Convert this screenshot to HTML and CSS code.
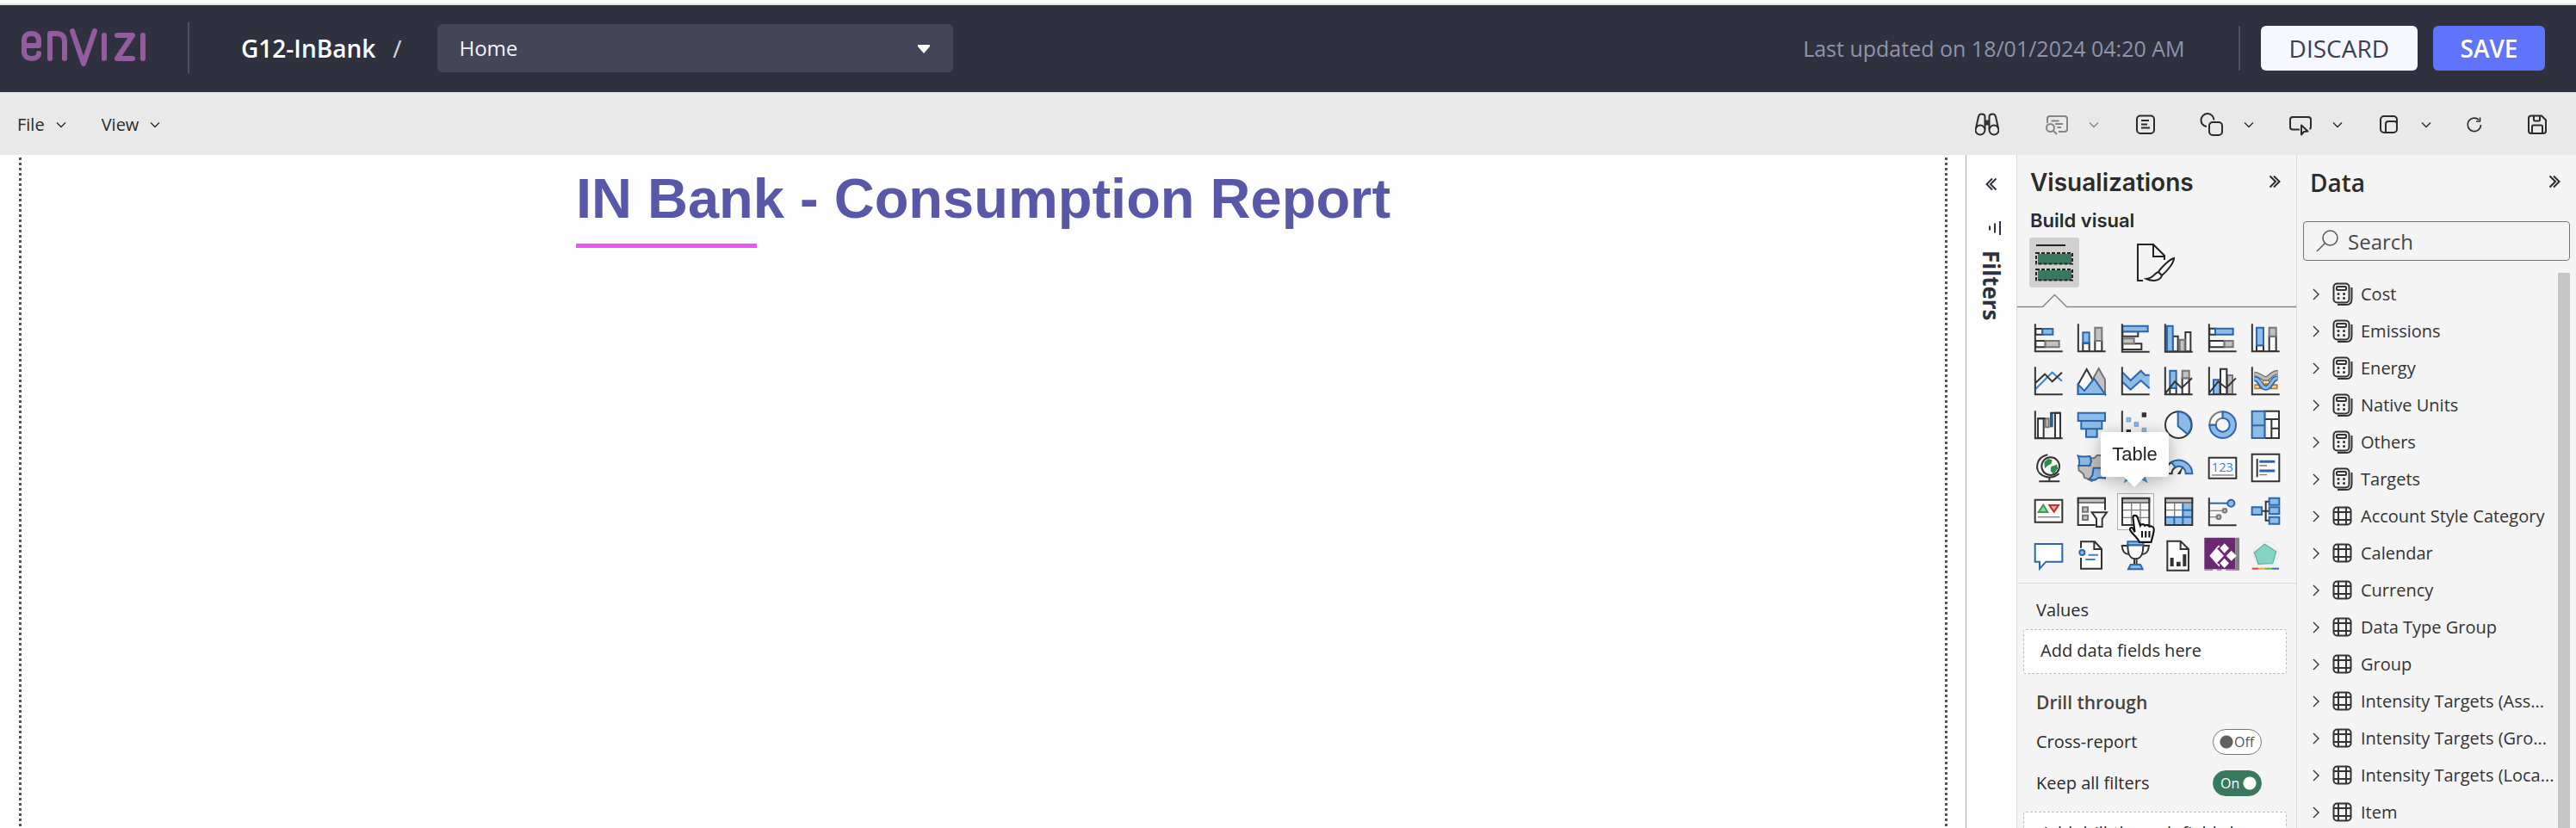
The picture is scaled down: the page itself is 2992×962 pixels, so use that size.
FILE: index.html
```html
<!DOCTYPE html>
<html lang="en">
<head>
<meta charset="utf-8">
<title>G12-InBank / Home</title>
<link rel="stylesheet" href="styles.css">
</head>
<body>
<svg class="defs" aria-hidden="true">
  <symbol id="chev-down" viewBox="0 0 12 8"><path d="M1 1.5l5 5 5-5"/></symbol>
  <symbol id="chev-right" viewBox="0 0 8 14"><path d="M1 1l6 6-6 6"/></symbol>
  <symbol id="dbl-right" viewBox="0 0 14 16"><path d="M1.5 1.5L8 8l-6.500 6.500M6 1.500L12.500 8L6 14.500"/></symbol>
  <symbol id="calc" viewBox="0 0 24 28"><rect x="1.500" y="1.500" width="18" height="22" rx="4"/><rect x="5" y="5" width="11" height="4" rx="1"/><path d="M22.500 6v13c0 4-2 7-6 7H6"/><path class="dots" d="M7 13.500h.1M13.500 13.500h.1M7 18.500h.1M13.500 18.500h.1"/></symbol>
  <symbol id="tbl" viewBox="0 0 24 24"><rect x="1.500" y="1.500" width="20" height="20" rx="4"/><path d="M7 1.500v20M16 1.500v20M1.500 7h20M1.500 16h20"/></symbol>
</svg>

<header class="topbar">
  <svg class="logo" viewBox="0 0 148 46" role="img" aria-label="envizi">
    <path d="M4 20h17v-6c0-5-3-8-8.500-8S4 9 4 14v13c0 5 4 8 9 8 4 0 8-2 8-6M34 35V6h8c6 0 9 4 9 9v20M60 3l13 38L86 3M97 8v27M112 8h18l-18 27h18M142 8v27"/>
  </svg>
  <span class="rule"></span>
  <span class="workspace">G12-InBank</span>
  <span class="slash">/</span>
  <div class="page-picker">
    <select aria-label="Page"><option>Home</option></select>
    <svg class="caret" viewBox="0 0 16 10"><path d="M1 0h14v2L8 10 1 2z"/></svg>
  </div>
  <span class="updated">Last updated on 18/01/2024 04:20 AM</span>
  <span class="rule rule-right"></span>
  <button class="btn btn-light">DISCARD</button>
  <button class="btn btn-primary">SAVE</button>
</header>

<nav class="toolbar">
  <button class="menu">File <svg class="chev"><use href="#chev-down"/></svg></button>
  <button class="menu">View <svg class="chev"><use href="#chev-down"/></svg></button>
  <div class="tools">
    <button class="tool single lead" aria-label="Explore"><svg class="ico" viewBox="0 0 28 28"><circle cx="6" cy="20" r="5.500"/><circle cx="22" cy="20" r="5.500"/><path d="M.8 19L4 4.500C4.500 2 6 1.500 7.500 1.500c2.500 0 4 1 4 3V19M27.200 19L24 4.500c-.5-2.500-2-3-3.500-3-2.500 0-4 1-4 3V19"/><path class="solid" d="M12 8.500h4v6h-4z"/></svg></button>
    <button class="tool faded" aria-label="Inspect"><svg class="ico" viewBox="0 0 28 28"><path d="M3 12V7c0-2 1-3 3-3h17c2 0 3 1 3 3v12c0 2-1 3-3 3h-7M7.500 9.500h9M12 13h9M14.500 17H19"/><circle cx="6.500" cy="17.500" r="4.500"/><path d="M10 21l4 4"/></svg><svg class="chev"><use href="#chev-down"/></svg></button>
    <button class="tool single" aria-label="Text box"><svg class="ico" viewBox="0 0 28 28"><rect x="4" y="3.500" width="20" height="20.500" rx="4"/><path d="M9 9h9M9 13.500h7M9 17.500h10"/></svg></button>
    <button class="tool" aria-label="Shapes"><svg class="ico" viewBox="0 0 28 28"><path d="M8 16A7.500 7.500 0 1 1 16.500 8.500"/><rect x="11" y="11" width="15" height="15" rx="4"/></svg><svg class="chev"><use href="#chev-down"/></svg></button>
    <button class="tool" aria-label="Buttons"><svg class="ico" viewBox="0 0 28 28"><path d="M13 19.500H5c-2 0-3-1-3-3V8c0-2 1-3 3-3h18c2 0 3 1 3 3v8.500c0 1-.5 2-1.500 2.500M15 14.500v11l3-3.500 4.500-.5z"/></svg><svg class="chev"><use href="#chev-down"/></svg></button>
    <button class="tool" aria-label="Visual interactions"><svg class="ico" viewBox="0 0 28 28"><rect x="4" y="4" width="19" height="19" rx="4"/><path d="M10 23V13c0-2 1-3 3-3h7c2 0 3 1 3 3"/></svg><svg class="chev"><use href="#chev-down"/></svg></button>
    <button class="tool single" aria-label="Refresh"><svg class="ico ico-small" viewBox="0 0 20 20"><path d="M17.500 10A7.700 7.700 0 1 1 15 4.200M16.500 1.500v4.500H12"/></svg></button>
    <button class="tool" aria-label="Save report"><svg class="ico" viewBox="0 0 28 28"><path d="M4 6.500C4 4.500 5 3.500 7 3.500h12l5 5V21c0 2-1 3-3 3H7c-2 0-3-1-3-3zM10 3.500V8c0 1 .5 1.500 1.500 1.500h4c1 0 1.500-.5 1.500-1.500V3.500M8 24v-8c0-1 .5-1.500 1.500-1.500h9c1 0 1.500.5 1.500 1.500v8"/></svg></button>
  </div>
</nav>

<main class="workarea">
  <section class="canvas">
    <h1 class="report-title">IN Bank - Consumption Report</h1>
  </section>

  <aside class="filters">
    <button class="collapse" aria-label="Expand filters"><svg class="dbl flip"><use href="#dbl-right"/></svg></button>
    <svg class="filter-ico" viewBox="0 0 14 18"><path d="M1 6.500v5M7 3.500v11M13 1v16"/></svg>
    <h2 class="filters-title">Filters</h2>
  </aside>

  <aside class="viz">
    <div class="pane-head"><h2 class="viz-title">Visualizations</h2><button class="collapse" aria-label="Collapse visualizations"><svg class="dbl"><use href="#dbl-right"/></svg></button></div>
    <h3 class="viz-sub">Build visual</h3>
    <div class="modes">
      <button class="mode active" aria-label="Build visual"><svg viewBox="0 0 44 44"><path class="k2" d="M1 2h34"/><path class="green" d="M3 12h39v12H3zM3 31h39v12H3z"/><path class="dash" d="M1 11h42v12.500H1zM1 30h42v12.500H1z"/></svg></button>
      <button class="mode" aria-label="Format visual"><svg viewBox="0 0 44 44"><path class="k2" d="M7 43H1V1h18l13 13v5M19 1v14h13"/><path class="k2" d="M43 17c-5 1-15 11-18 16l4 4c5-4 14-14 14-20zM25 33c-5 1-5 7-14 8 6 3 16 3 18-4"/></svg></button>
    </div>
    <svg class="notch" viewBox="0 0 325 17" preserveAspectRatio="xMinYMin slice"><path d="M0 15.500h29.500L43.500 1.500l14 14H900"/></svg>
    <div class="gallery">
      <button aria-label="Stacked bar chart"><svg viewBox="0 0 99 99"><path class="w" d="M4 18h24v20H4zM4 60h34v22H4z"/><path class="b" d="M28 18h36v20H28z"/><path class="g" d="M38 60h48v22H38z"/><path class="k" d="M2.500 1v96H98"/></svg></button>
      <button aria-label="Stacked column chart"><svg viewBox="0 0 99 99"><path class="w" d="M19 68h22v28H19zM61 60h24v36H61z"/><path class="b" d="M19 31h22v36H19z"/><path class="g" d="M61 14h24v46H61z"/><path class="k" d="M2.500 1v96H98"/></svg></button>
      <button aria-label="Clustered bar chart"><svg viewBox="0 0 99 99"><path class="w" d="M4 28h54v16H4zM4 70h66v20H4z"/><path class="g" d="M4 52h40v18H4z"/><path class="b" d="M4 8h88v20H4z"/><path class="k" d="M2.500 1v97H98"/></svg></button>
      <button aria-label="Clustered column chart"><svg viewBox="0 0 99 99"><path class="w" d="M29 44h18v53H29zM73 30h18v67H73z"/><path class="g" d="M53 56h18v41H53z"/><path class="b" d="M9 8h20v89H9z"/><path class="k" d="M2.500 1v97H98"/></svg></button>
      <button aria-label="100% stacked bar chart"><svg viewBox="0 0 99 99"><path class="w" d="M4 17h20v21H4zM4 60h52v22H4z"/><path class="b" d="M24 17h62v21H24z"/><path class="g" d="M56 60h30v22H56z"/><path class="k" d="M2.500 1v96H98"/></svg></button>
      <button aria-label="100% stacked column chart"><svg viewBox="0 0 99 99"><path class="w" d="M18 76h24v20H18zM62 44h24v52H62z"/><path class="b" d="M18 14h24v62H18z"/><path class="g" d="M62 14h24v30H62z"/><path class="k" d="M2.500 1v96H98"/></svg></button>

      <button aria-label="Line chart"><svg viewBox="0 0 99 99"><path class="bl" d="M4 78l58-58 34 30"/><path class="k" d="M4 56l32-30 26 26 34-32M2.500 1v96H98"/></svg></button>
      <button aria-label="Area chart"><svg viewBox="0 0 99 99"><path class="w" d="M2 96V62L32 9l34 60v27z"/><path class="g" d="M54 42L74 6l22 40v50z"/><path class="b" d="M2 62l22 22 34-42 38 54H2z"/></svg></button>
      <button aria-label="Stacked area chart"><svg viewBox="0 0 99 99"><path class="bf" d="M4 20l28 28 36-34 14 15h16v46L68 48 32 80 4 54z"/><path class="bs" d="M4 20l28 28 36-34 14 15h16M4 54l28 26 36-32 30 28"/><path class="k" d="M2.500 1v96H98"/></svg></button>
      <button aria-label="Line and stacked column chart"><svg viewBox="0 0 99 99"><path class="w" d="M19 74h22v22H19zM62 40h24v56H62z"/><path class="b" d="M19 14h22v60H19z"/><path class="g" d="M62 14h24v26H62z"/><path class="k" d="M4 92l32-40 24 22 36-34M2.500 1v96H98"/></svg></button>
      <button aria-label="Line and clustered column chart"><svg viewBox="0 0 99 99"><path class="b" d="M18 46h22v50H18z"/><path class="g" d="M66 30h18v66H66z"/><path class="w" d="M42 8h22v88H42z"/><path class="k" d="M4 90l30-38 28 22 34-34M2.500 1v96H98"/></svg></button>
      <button aria-label="Ribbon chart"><svg viewBox="0 0 99 99"><path class="r-o" d="M10 70h82M38 54h26"/><path class="r-oi" d="M14 70h12M72 70h14M42 54h18"/><path class="r-g" d="M10 26c18 0 26 16 40 16s20-22 42-22"/><path class="r-gi" d="M12 26c18 0 24 16 38 16s20-22 40-22"/><path class="r-b" d="M10 42c20 0 20 32 40 32s20-34 42-34"/><path class="r-bi" d="M12 42c20 0 20 32 38 32s20-34 40-34"/><path class="k" d="M2.500 1v96H98"/></svg></button>

      <button aria-label="Waterfall chart"><svg viewBox="0 0 99 99"><path class="w" d="M12 28h20v68H12zM72 8h18v88H72z"/><path class="g" d="M38 28h12v30H38z"/><path class="navy" d="M54 6h11v52H54z"/><path class="k" d="M12 28h26M56 8h34M2.500 1v96H98"/></svg></button>
      <button aria-label="Funnel"><svg viewBox="0 0 99 99"><path class="b" d="M2 8h94v28H2zM13 36h72v28H13zM30 64h38v28H30z"/></svg></button>
      <button aria-label="Scatter chart"><svg viewBox="0 0 99 99"><path class="k" d="M2.500 1v96H98"/><path class="sq" d="M18 25h14v14H18zM45 41h14v14H45zM72 61h14v14H72z"/><path class="solid" d="M71 7h16v16H71zM17 66h16v16H17z"/></svg></button>
      <button aria-label="Pie chart"><svg viewBox="0 0 99 99"><circle class="w" cx="49" cy="50" r="46"/><path class="b" d="M47 4a46 46 0 0 1 33 78L47 54z"/></svg></button>
      <button aria-label="Donut chart"><svg viewBox="0 0 99 99"><path class="g lite" d="M4 50A46 46 0 0 1 50 4v22a24 24 0 0 0-24 24z"/><path class="b" d="M50 4A46 46 0 1 1 4 50h22a24 24 0 1 0 24-24z"/></svg></button>
      <button aria-label="Treemap"><svg viewBox="0 0 99 99"><path class="w" d="M46 2h50v94H46zM46 30h50M70 30v66M70 62h26"/><path class="b" d="M2 2h44v94H2zM2 52h44"/></svg></button>

      <button aria-label="Map"><svg viewBox="0 0 99 99"><circle class="w" cx="56" cy="44" r="31"/><path class="leaf" d="M34 30l14-12 14 4-4 14-12 6-10 10zM58 46l20-8 4 14-16 20-10-12z"/><path class="k" d="M46 4C4 14-2 60 28 76c18 10 40 8 58-6M52 84v12M16 97h72"/></svg></button>
      <button aria-label="Filled map"><svg viewBox="0 0 99 99"><path class="g" d="M44 16l14 0 10-10 28 0v40l-20 20-18 22-8 8-14-8-12-4-4-14L4 58V42h40z"/><path class="b" d="M2 8c14 6 28 0 42 2l4 18-6 14H4c6-12 2-22-2-34zM56 50h40v36l-22-2-14 8-20-2 12-14z"/></svg></button>
      <button aria-label="Azure map"><svg viewBox="0 0 99 99"><path class="azure" d="M50 0l42 103-42-22-42 22z"/></svg></button>
      <button aria-label="Gauge"><svg viewBox="0 0 99 99"><path class="w" d="M2 70A48 48 0 0 1 30 27l10 20a24 24 0 0 0-14 23z"/><path class="b" d="M24 30a48 48 0 0 1 73 40H74a24 24 0 0 0-36-22z"/><path class="solid" d="M66 42L56 72H44z"/></svg></button>
      <button aria-label="Card"><svg viewBox="0 0 99 99"><path class="w" d="M2 14h95v72H2z"/><text class="num" x="49" y="63">123</text><path class="gs" d="M12 75h76"/></svg></button>
      <button aria-label="Multi-row card"><svg viewBox="0 0 99 99"><path class="w" d="M2 2h95v95H2z"/><path class="k" d="M20 18v64"/><path class="navyline" d="M28 28h54M28 60h54"/><path class="gs" d="M28 42h26M28 74h26"/></svg></button>

      <button aria-label="KPI"><svg viewBox="0 0 99 99"><path class="w" d="M2 8h95v78H2z"/><path class="up" d="M14 51l17-25 15 25z"/><path class="down" d="M52 27h32L68 50z"/><path class="gs" d="M12 68h76"/></svg></button>
      <button aria-label="Slicer"><svg viewBox="0 0 99 99"><path class="wf" d="M2 18h94v76H2z"/><path class="g" d="M2 2h94v16H2zM18 34h18v16H18zM18 62h18v16H18z"/><path class="k" d="M96 44V2H2v94h60"/><path class="w" d="M50 52h52L86 74v28H66V74z"/></svg></button>
      <button class="picked" aria-label="Table"><svg viewBox="0 0 99 99"><path class="wf" d="M3 2h94v94H3z"/><path class="gs" d="M35 18v78M66 18v78M3 44h94M3 70h94"/><path class="g" d="M3 4h94v14H3z"/><path class="k" d="M3 2h94v94H3z"/></svg></button>
      <button aria-label="Matrix"><svg viewBox="0 0 99 99"><path class="wf" d="M3 2h94v94H3z"/><path class="bf" d="M64 20h32v76H3V68h61z"/><path class="gs" d="M35 18v50M3 44h62"/><path class="bs" d="M64 20v76M34 68v28M3 68h94M64 44h32"/><path class="g" d="M3 4h94v14H3z"/><path class="k" d="M3 2h94v94H3z"/></svg></button>
      <button aria-label="Key influencers"><svg viewBox="0 0 99 99"><path class="bs" d="M4 20h62"/><path class="gs" d="M4 46h46M4 68h26"/><circle class="b" cx="79" cy="20" r="12"/><circle class="g" cx="57" cy="46" r="7"/><circle class="g" cx="36" cy="68" r="7"/><path class="k" d="M2.500 1v96H98"/></svg></button>
      <button aria-label="Decomposition tree"><svg viewBox="0 0 99 99"><path class="k" d="M38 47h24M62 14H50v66h12"/><path class="b" d="M2 34h34v26H2zM62 2h35v24H62zM62 34h35v24H62zM62 68h35v24H62z"/></svg></button>

      <button aria-label="Q&amp;A"><svg viewBox="0 0 99 99"><path class="bw" d="M2 12h95v62H40L18 98V74H2z"/></svg></button>
      <button aria-label="Narrative"><svg viewBox="0 0 99 99"><path class="wf" d="M12 4h48l24 26v70H12z"/><path class="k" d="M12 26V4h48l24 26v68H12V60M58 4v26h26"/><circle class="b" cx="16" cy="42" r="9"/><path class="bl" d="M38 50h34M28 66h34"/></svg></button>
      <button aria-label="Goals"><svg viewBox="0 0 99 99"><path class="w" d="M22 16h54c0 34-8 48-27 48S22 50 22 16zM22 18H2c2 24 12 30 24 30M76 18h20c-2 24-12 30-24 30M45 64v20h8V64"/><path class="b" d="M22 4h54v12H22zM32 84h34l8 16H24z"/></svg></button>
      <button aria-label="Paginated report"><svg viewBox="0 0 99 99"><path class="w" d="M10 2h46l28 28v74H10zM56 2v28h28"/><path class="solid" d="M20 60h12v30H20zM42 74h14v16H42zM64 48h12v42H64z"/></svg></button>
      <button aria-label="Power Apps"><svg viewBox="0 0 99 99"><path class="plum" d="M-14-10H94v110H-14z"/><path class="ash" d="M94-10h14v114H94zM-14 100h30v4h-30zM30 100h16v4H30zM60 100h34v4H60z"/><path class="dia" d="M56 10l16 17-16 17-16-17zM56 62l16 17-16 17-16-17zM80 35l18 18-18 18-18-18zM36 16l4 6-10 6 24 25-24 25 10 6-2 8L4 53z"/></svg></button>
      <button aria-label="Radar chart"><svg viewBox="0 0 99 99"><circle class="halo" cx="50" cy="48" r="44"/><circle class="halo" cx="50" cy="48" r="30"/><path class="teal" d="M46 12l40 26-12 42-50 2L10 42z"/><path class="c1" d="M2 98h22"/><path class="c2" d="M24 98h24"/><path class="c3" d="M48 98h24"/><path class="c4" d="M72 98h24"/></svg></button>

      <div class="tooltip" role="tooltip">Table</div>
      <svg class="pointer" viewBox="0 0 30 34"><path d="M7 20L5 4C5 1 9 1 10 4l3 9c1-2 4-2 5 0 1-1 4-1 5 1 2-1 5 0 5 3 0 5-2 8-3 14H12C10 26 4 22 2 18c-1-2 1-4 3-2z"/><path class="fingers" d="M15 19v7M19 19v7M23 19v7"/></svg>
    </div>
    <div class="wells">
      <p class="well-label">Values</p>
      <div class="well">Add data fields here</div>
      <h3 class="drill">Drill through</h3>
      <label class="switch-row">Cross-report <span class="switch"><input type="checkbox" role="switch"><span class="state">Off</span></span></label>
      <label class="switch-row">Keep all filters <span class="switch on"><input type="checkbox" role="switch" checked><span class="state">On</span></span></label>
      <div class="well">Add drill-through fields here</div>
    </div>
  </aside>

  <aside class="data">
    <div class="pane-head"><h2 class="data-title">Data</h2><button class="collapse" aria-label="Collapse data"><svg class="dbl"><use href="#dbl-right"/></svg></button></div>
    <label class="search"><svg viewBox="0 0 26 26"><circle cx="16.500" cy="9.500" r="8.500"/><path d="M10.500 15.500L1 25"/></svg><input type="text" placeholder="Search" aria-label="Search"></label>
    <div class="fields">
      <ul class="tree">
        <li><svg class="cr"><use href="#chev-right"/></svg><svg class="ti"><use href="#calc"/></svg><span>Cost</span></li>
        <li><svg class="cr"><use href="#chev-right"/></svg><svg class="ti"><use href="#calc"/></svg><span>Emissions</span></li>
        <li><svg class="cr"><use href="#chev-right"/></svg><svg class="ti"><use href="#calc"/></svg><span>Energy</span></li>
        <li><svg class="cr"><use href="#chev-right"/></svg><svg class="ti"><use href="#calc"/></svg><span>Native Units</span></li>
        <li><svg class="cr"><use href="#chev-right"/></svg><svg class="ti"><use href="#calc"/></svg><span>Others</span></li>
        <li><svg class="cr"><use href="#chev-right"/></svg><svg class="ti"><use href="#calc"/></svg><span>Targets</span></li>
        <li><svg class="cr"><use href="#chev-right"/></svg><svg class="ti"><use href="#tbl"/></svg><span>Account Style Category</span></li>
        <li><svg class="cr"><use href="#chev-right"/></svg><svg class="ti"><use href="#tbl"/></svg><span>Calendar</span></li>
        <li><svg class="cr"><use href="#chev-right"/></svg><svg class="ti"><use href="#tbl"/></svg><span>Currency</span></li>
        <li><svg class="cr"><use href="#chev-right"/></svg><svg class="ti"><use href="#tbl"/></svg><span>Data Type Group</span></li>
        <li><svg class="cr"><use href="#chev-right"/></svg><svg class="ti"><use href="#tbl"/></svg><span>Group</span></li>
        <li><svg class="cr"><use href="#chev-right"/></svg><svg class="ti"><use href="#tbl"/></svg><span>Intensity Targets (Ass...</span></li>
        <li><svg class="cr"><use href="#chev-right"/></svg><svg class="ti"><use href="#tbl"/></svg><span>Intensity Targets (Gro...</span></li>
        <li><svg class="cr"><use href="#chev-right"/></svg><svg class="ti"><use href="#tbl"/></svg><span>Intensity Targets (Loca...</span></li>
        <li><svg class="cr"><use href="#chev-right"/></svg><svg class="ti"><use href="#tbl"/></svg><span>Item</span></li>
      </ul>
      <div class="scrollbar"></div>
    </div>
  </aside>
</main>
</body>
</html>
```

FILE: styles.css
```css
* { box-sizing: border-box; }
html, body { height: 100%; }
body {
  margin: 0;
  display: flex;
  flex-direction: column;
  overflow: hidden;
  background: #fefefe;
  color: #2b2b2b;
  font-family: "Open Sans", "Noto Sans", sans-serif;
  font-size: 20px;
}
h1, h2, h3, p, ul { margin: 0; padding: 0; }
button { border: 0; background: none; padding: 0; color: inherit; font: inherit; }
svg { display: block; flex: none; fill: none; stroke: currentColor; }
.defs { position: absolute; width: 0; height: 0; }

/* Top bar */
.topbar {
  flex: none;
  display: flex;
  align-items: center;
  height: 103px;
  margin-top: 4px;
  padding: 0 36px 2px 24px;
  border-top: 2px solid #dfe5df;
  background: #2f313e;
  color: #fff;
}
.logo { width: 148px; height: 46px; stroke: #935c9e; stroke-width: 6; stroke-linecap: round; stroke-linejoin: round; }
.rule { width: 2px; height: 59px; margin-left: 46px; background: #4e505d; }
.workspace { margin-left: 60px; font-size: 28px; font-weight: 600; }
.slash { margin-left: 20px; font-size: 28px; color: #d4d8e8; }
.page-picker { position: relative; width: 20.4%; height: 56px; margin-left: 42px; }
.page-picker select {
  appearance: none;
  width: 100%;
  height: 100%;
  padding: 0 25px;
  border: 0;
  border-radius: 6px;
  background: #444559;
  color: #f2f4fb;
  font: 24px "Open Sans", sans-serif;
}
.caret { position: absolute; right: 26px; top: 24px; width: 16px; height: 10px; fill: #fff; stroke: none; }
.updated { margin-left: auto; font-size: 25px; color: #8d94ae; }
.rule-right { height: 52px; margin: 0 24px 0 62px; }
.btn { height: 52px; min-width: 130px; border-radius: 6px; font-size: 28px; }
.btn-light { padding: 0 33px; background: #f7f8ff; color: #3c3d50; }
.btn-primary { margin-left: 18px; background: #5f74fa; color: #fff; font-weight: 600; }

/* Command bar */
.toolbar { flex: none; display: flex; align-items: center; height: 73px; padding: 2px 31px 0 20px; background: #e9e9e9; }
.menu { display: flex; align-items: center; gap: 13px; margin-right: 41px; }
.chev { width: 12px; height: 8px; stroke-width: 1.4; }
.tools { display: flex; align-items: center; gap: 40px; margin-left: auto; }
.tool { display: flex; align-items: center; gap: 23px; }
.single { margin-right: 9px; }
.lead { margin-right: 13px; }
.faded { color: #858585; }
.ico { width: 28px; height: 28px; stroke-width: 2; stroke-linejoin: round; }
.ico-small { width: 20px; height: 20px; stroke-width: 1.6; }
.solid { fill: #333; stroke: none; }

/* Work area */
.workarea { flex: 1; min-height: 0; display: flex; overflow: hidden; }
.canvas {
  flex: 1;
  margin: 3px 21px 0 22px;
  padding-top: 12px;
  text-align: center;
  background:
    repeating-linear-gradient(#555 0 3px, transparent 3px 6px) left / 3px 100% no-repeat,
    repeating-linear-gradient(#555 0 3px, transparent 3px 6px) right / 3px 100% no-repeat;
}
.report-title {
  display: inline-block;
  color: #5957a8;
  font: bold 65px/72px "Liberation Sans", Arial, sans-serif;
  white-space: nowrap;
}
.report-title::after { content: ""; display: block; width: 210px; height: 5px; margin-top: 16px; background: #ef52fa; }

.collapse { display: block; }
.dbl { width: 14px; height: 16px; stroke-width: 2; }
.flip { transform: rotate(180deg); }

.filters { flex: none; width: 59px; padding-top: 26px; display: flex; flex-direction: column; align-items: center; border-left: 1px solid #aaa; color: #2f3140; }
.filter-ico { width: 14px; height: 18px; margin: 34px 0 17px 8px; stroke-width: 2; }
.filters-title { writing-mode: vertical-rl; font-size: 26px; line-height: 28px; font-weight: 700; }

.viz, .data { flex: none; width: 325px; background: #f4f4f4; border-left: 1px solid #dadada; }
.viz { display: flex; flex-direction: column; }
.viz > * { flex: none; }
.pane-head { flex: none; display: flex; align-items: center; justify-content: space-between; height: 64px; padding: 0 18px 0 15px; }
.pane-head .collapse { margin-bottom: 2px; }
.viz-title { font: 600 28px/40px Inter, sans-serif; }
.viz-sub { padding-left: 15px; font: 600 22px/24px Inter, sans-serif; }
.modes { display: flex; gap: 60px; padding: 8px 14px 0; }
.mode { width: 58px; height: 58px; display: grid; place-items: center; border-radius: 3px; }
.mode.active { background: #d0d0d0; }
.mode svg { width: 44px; height: 44px; }
.k2 { stroke: #222; stroke-width: 2; }
.green { fill: #37785f; stroke: none; }
.dash { stroke: #222; stroke-width: 2; stroke-dasharray: 4 2; }
.notch { width: 100%; height: 17px; margin-top: 7px; stroke: #888; stroke-width: 1.5; }

.gallery { position: relative; display: grid; grid-template-columns: repeat(6, 1fr); grid-template-rows: repeat(6, 1fr); height: 303px; margin: 9px 10px 7px 11px; }
.gallery button { display: grid; place-items: center; }
.gallery button svg { width: 33px; height: 33px; overflow: visible; stroke-width: 6; }
.picked { place-self: center; width: 43px; height: 43px; outline: 1px solid #b0b0b0; outline-offset: -1px; background: #f8f8f8; }
.k { stroke: #333; }
.w { fill: #fbfbfb; stroke: #333; }
.wf { fill: #fbfbfb; stroke: none; }
.g { fill: #c2c2c2; stroke: #767676; }
.lite { fill: #fbfbfb; }
.gs { stroke: #7d7d7d; stroke-width: 4; }
.b { fill: #8dbbe8; stroke: #2a66ab; }
.bf { fill: #8dbbe8; stroke: none; }
.bs { stroke: #2a66ab; }
.bl { stroke: #3f84c5; }
.bw { fill: #fff; stroke: #2a66ab; }
.sq { fill: #8dbbe8; stroke: #4d8bc4; stroke-width: 2; }
.navy { fill: #2a5c9a; stroke: none; }
.navyline { stroke: #2a66ab; stroke-width: 9; }
.azure { fill: #4a93d8; stroke: none; }
.leaf { fill: #2f8a48; stroke: none; }
.num { fill: #3b84cc; stroke: none; font: 44px "Open Sans", sans-serif; text-anchor: middle; }
.up { fill: #9ad3a5; stroke: #3f9a56; }
.down { fill: #f2a0a0; stroke: #b93333; }
.r-o { stroke: #c47a22; stroke-width: 18; }
.r-oi { stroke: #ffe3ae; stroke-width: 7; }
.r-g { stroke: #767676; stroke-width: 18; }
.r-gi { stroke: #bdbdbd; stroke-width: 9; }
.r-b { stroke: #2a66ab; stroke-width: 18; }
.r-bi { stroke: #8dbbe8; stroke-width: 9; }
.plum { fill: #6b2873; stroke: none; }
.ash { fill: #858088; stroke: none; }
.dia { fill: #fff; stroke: none; }
.halo { stroke: #dedede; stroke-width: 2; }
.teal { fill: #85d3c5; stroke: #5cb8a8; stroke-width: 4; }
.c1 { stroke: #d8423a; }
.c2 { stroke: #eda63a; }
.c3 { stroke: #55b060; }
.c4 { stroke: #3a66c0; }

.tooltip {
  position: absolute;
  left: 86px;
  top: 135px;
  width: 79px;
  border-radius: 4px;
  background: #fff;
  color: #222;
  font: 22px/52px "Liberation Sans", Arial, sans-serif;
  text-align: center;
  filter: drop-shadow(0 4px 10px rgba(0, 0, 0, 0.28));
}
.tooltip::after { content: ""; position: absolute; left: 27px; top: 100%; border: 12px solid transparent; border-top-color: #fff; border-bottom: 0; }
.pointer { position: absolute; left: 118px; top: 230px; width: 32px; height: 36px; fill: #fff; stroke: #111; stroke-width: 2; }

.wells { border-top: 1px solid #dadada; padding: 16px 11px 0 7px; }
.well-label, .drill, .switch-row { padding-left: 15px; line-height: 30px; }
.well { height: 52px; padding-left: 19px; border: 1px dashed #bdbdbd; border-radius: 3px; background: #fff; line-height: 48px; }
.well-label { margin-bottom: 7px; }
.drill { margin: 18px 0 16px; font-size: 21px; font-weight: 600; color: #444; }
.switch-row { display: flex; align-items: center; justify-content: space-between; padding-right: 29px; margin-bottom: 18px; }
.switch { display: grid; width: 57px; height: 30px; }
.switch input, .state { grid-area: 1 / 1; }
.switch input { appearance: none; margin: 0; border: 1px solid #777; border-radius: 15px; background: radial-gradient(circle at 15px 50%, #5f5f5f 7px, #fff 8px); }
.state { padding-left: 25px; font-size: 16px; line-height: 30px; color: #555; }
.switch.on input { border-color: #37785f; background: radial-gradient(circle at 42px 50%, #fff 7px, #37785f 8px); }
.on .state { padding-left: 9px; color: #fff; }

/* Data pane */
.data { display: flex; flex-direction: column; }
.data-title { font-size: 28px; line-height: 40px; font-weight: 600; }
.search { flex: none; display: flex; align-items: center; gap: 11px; height: 46px; margin: 13px 7px 14px; padding: 0 14px; border: 1px solid #757575; border-radius: 4px; color: #555; }
.search svg { width: 26px; height: 26px; stroke-width: 1.5; }
.search input { flex: 1; min-width: 0; padding: 0; border: 0; background: none; outline: 0; font: 24px "Open Sans", sans-serif; }
.search input::placeholder { color: #484848; opacity: 1; }
.fields { flex: 1; min-height: 0; display: flex; justify-content: space-between; padding-right: 7px; }
.tree { list-style: none; padding: 3px 0 0 18px; min-width: 0; }
.tree li { display: flex; align-items: center; height: 43px; white-space: nowrap; color: #333; }
.cr { width: 8px; height: 14px; margin-right: 15px; stroke-width: 1.4; }
.ti { width: 24px; height: 28px; margin-right: 9px; stroke-width: 2; }
.dots { stroke-width: 3; stroke-linecap: round; }
.scrollbar { flex: none; width: 14px; background: #c6c6c6; }
```
